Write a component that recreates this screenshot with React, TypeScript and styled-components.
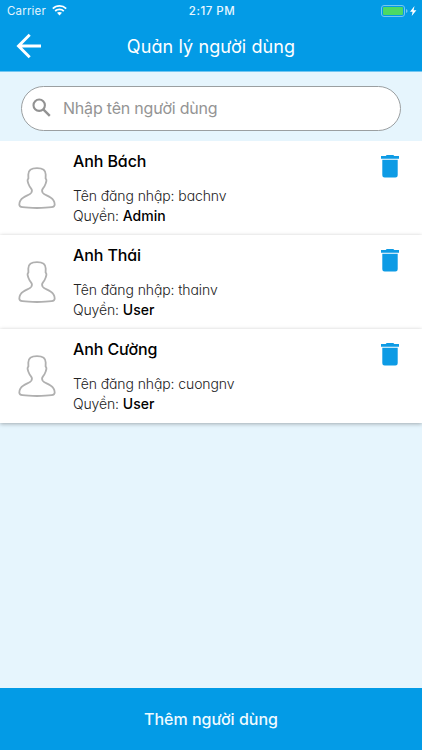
import React from "react";
import styled, { createGlobalStyle } from "styled-components";

const GlobalStyle = createGlobalStyle`
  * { box-sizing: border-box; }
  html, body { margin: 0; padding: 0; }
  body { font-family: Inter, "Noto Sans", sans-serif; color: #000; }
`;

const Screen = styled.div`
  width: 100%;
  height: 750px;
  display: flex;
  flex-direction: column;
  overflow: hidden;
  background: #e6f5fd;
`;

const Header = styled.header`
  height: 72px;
  flex: none;
  background: #039be6;
  color: #fff;
  border-bottom: 1px solid #72c6f1;
`;

const StatusBar = styled.div`
  height: 21px;
  display: grid;
  grid-template-columns: 1fr auto 1fr;
  align-items: center;
  padding: 0 5px 0 7px;
`;

const Carrier = styled.div`
  display: flex;
  align-items: center;
  gap: 6px;
  font-size: 11.5px;
  letter-spacing: 0.18px;
  color: #e2f4fd;
`;

const Clock = styled.div`
  font-size: 11.5px;
  font-weight: 550;
  letter-spacing: 0.5px;
  color: #e8f7ff;
`;

const Battery = styled.div`
  display: flex;
  justify-content: flex-end;
`;

const NavBar = styled.div`
  height: 50px;
  display: grid;
  grid-template-columns: 60px 1fr 60px;
  align-items: center;
`;

const BackButton = styled.button`
  border: 0;
  background: none;
  padding: 0 0 0 16px;
  display: flex;
`;

const Label = styled.span<{ $size: number; $weight?: number; $spacing?: number }>`
  font-size: ${(p) => p.$size}px;
  font-weight: ${(p) => p.$weight ?? 400};
  letter-spacing: ${(p) => p.$spacing ?? 0}px;
  font-feature-settings: "cv11" 1;
  white-space: nowrap;
`;

const Title = styled.h1`
  margin: 0;
  padding-bottom: 3px;
  text-align: center;
  line-height: 24px;
`;

const SearchArea = styled.div`
  flex: none;
  height: 69px;
  padding: 14px 21px 0;
`;

const SearchBox = styled.div`
  height: 45px;
  display: flex;
  align-items: center;
  gap: 10px;
  padding: 0 0 2px 9px;
  border: 1px solid #9b9fa1;
  border-radius: 23px;
  background: #fff;
`;

const SearchInput = styled.input`
  flex: 1;
  min-width: 0;
  border: 0;
  outline: 0;
  padding: 0;
  background: none;
  font-family: inherit;
  font-size: 16px;
  letter-spacing: -0.2px;
  &::placeholder { color: #949494; opacity: 1; }
`;

const List = styled.ul`
  flex: 1;
  margin: 0;
  padding: 0;
  list-style: none;
  overflow: hidden;
`;

const Row = styled.li`
  height: 94px;
  display: flex;
  background: #fff;
  box-shadow: 0 1px 4px rgba(0, 0, 0, 0.3);
`;

const Avatar = styled.div`
  width: 73px;
  flex: none;
  padding: 25px 0 0 18px;
`;

const Details = styled.div`
  flex: 1;
  display: flex;
  flex-direction: column;
  padding-top: 8px;
`;

const Name = styled.div`
  height: 37px;
  line-height: 24px;
`;

const Line = styled.div`
  height: 20px;
  line-height: 20px;
  display: flex;
  gap: 4px;
  color: #222;
  strong { color: #000; }
`;

const DeleteButton = styled.button`
  border: 0;
  background: none;
  padding: 13px 22px 0 0;
  display: flex;
  align-items: flex-start;
`;

const Footer = styled.button`
  flex: none;
  height: 62px;
  border: 0;
  padding: 0;
  background: #039be6;
  color: #effaff;
  font-family: inherit;
`;

const WifiIcon = () => (
  <svg width="15" height="11" viewBox="0 0 15 11" fill="#fff">
    <path d="M7.5 0C4.7 0 2.1 1.1.2 2.9l1.2 1.3a8.900 8.900 0 0 1 12.200 0l1.200-1.300A10.600 10.600 0 0 0 7.500 0z" />
    <path d="M7.5 3.5c-1.900 0-3.600.7-4.900 1.900l1.200 1.300a5.400 5.400 0 0 1 7.400 0l1.200-1.300a7.100 7.100 0 0 0-4.900-1.900z" />
    <path d="M7.5 6.9c-1 0-1.800.3-2.500.9l2.500 2.700L10 7.800c-.7-.6-1.500-.9-2.500-.9z" />
  </svg>
);

const BatteryIcon = () => (
  <svg width="36" height="12" viewBox="0 0 36 12">
    <rect x=".5" y=".5" width="23" height="11" rx="2.5" fill="none" stroke="#73c7f1" />
    <rect x="2" y="2" width="20" height="8" rx="1" fill="#4cd964" />
    <path d="M25 4q1.600.4 1.600 2T25 8z" fill="#73c7f1" />
    <path d="M33.500 1 29 6.700h2.600L30.700 11l4.700-5.700h-2.800z" fill="#fff" />
  </svg>
);

const BackIcon = () => (
  <svg width="26" height="26" viewBox="0 0 26 26" fill="none" stroke="#fff" strokeWidth="2.9">
    <path d="M25 13H3M13.700 1.800 2.500 13l11.200 11.200" />
  </svg>
);

const SearchIcon = () => (
  <svg width="22" height="22" viewBox="0 0 22 22" fill="none" stroke="#929292">
    <circle cx="8.2" cy="8.2" r="5.700" strokeWidth="2.1" />
    <path d="m12.300 12.300 6.500 6.500" strokeWidth="2.4" />
  </svg>
);

const PersonIcon = () => (
  <svg width="38" height="44" viewBox="0 0 38 44" fill="none" stroke="#b0b0b0" strokeWidth="1.8" strokeLinejoin="round">
    <path d="M19 2.200C13 2.200 10.300 4 10.300 8.500L10.400 12.500C9.300 13.200 9.400 15 10.200 17.200C10.900 19 11.500 20.800 13 22.400C14 23.500 14 25.500 13.400 26.600C12 28.900 8.500 29.500 5.500 31.400C2.500 33.300 1.300 35.700 1.300 38.500C1.300 40.500 2.300 40.900 4.500 41.200C8.500 41.800 13.800 42 19 42C24.200 42 29.500 41.800 33.500 41.200C35.700 40.900 36.700 40.500 36.700 38.500C36.700 35.700 35.500 33.300 32.500 31.400C29.500 29.500 26 28.900 24.600 26.600C24 25.500 24 23.500 25 22.400C26.500 20.800 27.100 19 27.800 17.200C28.600 15 28.700 13.200 27.600 12.500L27.700 8.500C27.700 4 25 2.200 19 2.200Z" />
  </svg>
);

const TrashIcon = () => (
  <svg width="20" height="24" viewBox="0 0 20 24" fill="#0d9be5">
    <path d="M1 2h4.700l1-1h6.600l1 1H19v2.700H1zM2.300 5.800h15.400v15.500q0 2.300-2.300 2.300H4.600q-2.300 0-2.300-2.300z" />
  </svg>
);

type User = {
  name: string;
  login: string;
  role: string;
};

const users: User[] = [
  { name: "Anh Bách", login: "bachnv", role: "Admin" },
  { name: "Anh Thái", login: "thainv", role: "User" },
  { name: "Anh Cường", login: "cuongnv", role: "User" },
];

const UserRow = ({ user }: { user: User }) => (
  <Row>
    <Avatar><PersonIcon /></Avatar>
    <Details>
      <Name><Label $size={16} $weight={520} $spacing={-0.1}>{user.name}</Label></Name>
      <Line>
        <Label $size={14} $weight={350} $spacing={-0.1}>Tên đăng nhập: {user.login}</Label>
      </Line>
      <Line>
        <Label $size={14} $weight={350} $spacing={-0.15}>Quyền:</Label>
        <Label as="strong" $size={14} $weight={550}>{user.role}</Label>
      </Line>
    </Details>
    <DeleteButton aria-label="Xóa"><TrashIcon /></DeleteButton>
  </Row>
);

export default function App() {
  return (
    <>
      <GlobalStyle />
      <Screen>
        <Header>
          <StatusBar>
            <Carrier>Carrier <WifiIcon /></Carrier>
            <Clock>2:17 PM</Clock>
            <Battery><BatteryIcon /></Battery>
          </StatusBar>
          <NavBar>
            <BackButton aria-label="Quay lại"><BackIcon /></BackButton>
            <Title><Label $size={18} $weight={420} $spacing={0.1}>Quản lý người dùng</Label></Title>
          </NavBar>
        </Header>
        <SearchArea>
          <SearchBox>
            <SearchIcon />
            <SearchInput placeholder="Nhập tên người dùng" />
          </SearchBox>
        </SearchArea>
        <List>
          {users.map((user) => <UserRow key={user.login} user={user} />)}
        </List>
        <Footer><Label $size={16} $weight={500}>Thêm người dùng</Label></Footer>
      </Screen>
    </>
  );
}
